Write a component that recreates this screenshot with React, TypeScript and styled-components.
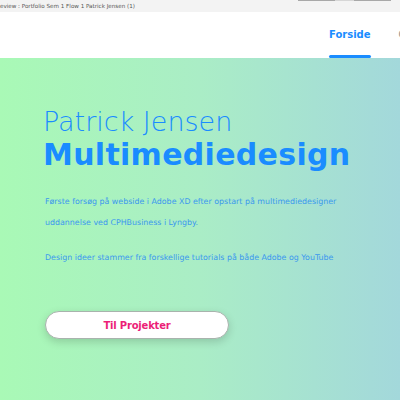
import React from "react";
import styled, { createGlobalStyle } from "styled-components";

const Global = createGlobalStyle`
  html, body { margin: 0; padding: 0; overflow: hidden; }
  body { width: 400px; height: 400px; font-family: "Open Sans", "Liberation Sans", sans-serif; }
  #root { width: 400px; height: 400px; }
`;

const Page = styled.div`
  width: 400px;
  height: 400px;
  display: flex;
  flex-direction: column;
  overflow: hidden;
`;

const TitleStrip = styled.div`
  height: 12px;
  flex: none;
  background: #f3f3f3;
  position: relative;
  display: flex;
  align-items: center;
  font-family: "DejaVu Sans", sans-serif;
  font-size: 5.6px;
  color: #555;
  white-space: nowrap;
  overflow: hidden;
  padding-bottom: 1px;
  box-sizing: border-box;
`;

const StripBar = styled.div`
  position: absolute;
  top: 0;
  left: 298px;
  width: 93px;
  height: 1px;
  background: linear-gradient(to right, #a8a8a8 0 40%, #d6d6d6 40% 60%, #a8a8a8 60%);
`;

const Header = styled.header`
  height: 46px;
  flex: none;
  background: #ffffff;
  display: flex;
  justify-content: flex-start;
  align-items: stretch;
  padding-left: 329px;
  overflow: hidden;
  box-sizing: border-box;
`;

const Nav = styled.nav`
  display: flex;
  gap: 28px;
  flex: none;
`;

const NavItem = styled.a<{ $active?: boolean }>`
  position: relative;
  display: flex;
  align-items: center;
  padding-bottom: 2px;
  font-family: "DejaVu Sans", sans-serif;
  font-weight: 700;
  font-size: 10px;
  white-space: nowrap;
  color: ${(p) => (p.$active ? "#1a8cff" : "#a0a0a0")};
  text-decoration: none;
  &::after {
    content: "";
    display: ${(p) => (p.$active ? "block" : "none")};
    position: absolute;
    left: 0;
    right: 0;
    bottom: 0;
    height: 3px;
    border-radius: 2px;
    background: #1a8cff;
  }
`;

const Hero = styled.main`
  flex: 1;
  background: linear-gradient(to right, #a9f9b6 0%, #aaedc6 50%, #a3d8db 100%);
  padding: 47px 0 0 43px;
  display: flex;
  flex-direction: column;
  align-items: flex-start;
`;

const Name = styled.h1`
  margin: 0;
  font-family: "DejaVu Sans", sans-serif;
  font-weight: 200;
  font-size: 27px;
  line-height: 33px;
  color: #1a8cff;
  letter-spacing: 0;
`;

const Role = styled.h2`
  margin: 0;
  font-family: "DejaVu Sans", sans-serif;
  font-weight: 700;
  font-size: 30px;
  line-height: 34px;
  color: #1a8cff;
  letter-spacing: 0.3px;
`;

const Intro = styled.div`
  margin-top: 19px;
  margin-left: 2px;
  display: flex;
  flex-direction: column;
  gap: 14px;
`;

const Para = styled.p`
  margin: 0;
  font-family: "DejaVu Sans", sans-serif;
  font-size: 7.9px;
  line-height: 21px;
  color: #3b98ee;
`;

const Button = styled.button`
  margin-top: 43px;
  margin-left: 2px;
  width: 184px;
  height: 28px;
  border-radius: 14px;
  border: 1px solid #a9b3ad;
  background: #ffffff;
  box-shadow: 0 3px 8px rgba(0, 0, 0, 0.16);
  font-family: "DejaVu Sans", sans-serif;
  font-weight: 700;
  font-size: 10px;
  letter-spacing: -0.2px;
  color: #ec1f78;
  cursor: pointer;
`;

export default function App() {
  return (
    <>
      <Global />
      <Page>
        <TitleStrip>
          eview : Portfolio Sem 1 Flow 1 Patrick Jensen (1)
          <StripBar />
        </TitleStrip>
        <Header>
          <Nav>
            <NavItem $active>Forside</NavItem>
            <NavItem>Om mig</NavItem>
          </Nav>
        </Header>
        <Hero>
          <Name>Patrick Jensen</Name>
          <Role>Multimediedesign</Role>
          <Intro>
            <Para>
              Første forsøg på webside i Adobe XD efter opstart på multimediedesigner
              <br />
              uddannelse ved CPHBusiness i Lyngby.
            </Para>
            <Para>Design ideer stammer fra forskellige tutorials på både Adobe og YouTube</Para>
          </Intro>
          <Button>Til Projekter</Button>
        </Hero>
      </Page>
    </>
  );
}
